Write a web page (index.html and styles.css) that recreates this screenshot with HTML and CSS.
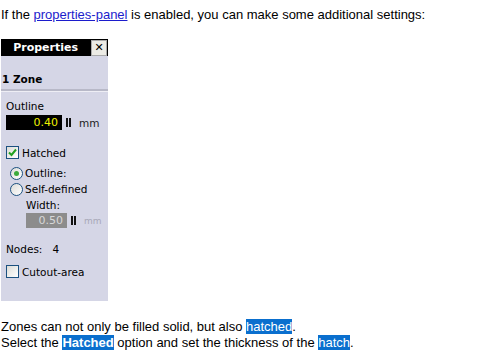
FILE: index.html
```html
<!DOCTYPE html>
<html>
  <head>
    <meta charset="UTF-8">
    <title>Zones</title>
    <link rel="stylesheet" href="styles.css">
  </head>
  <body>
    <p class="intro">If the <a href="#">properties-panel</a> is enabled, you can make some additional settings:</p>

    <div class="panel">
      <div class="panel-head">
        <span class="panel-title">Properties</span>
        <span class="close">&#x2715;</span>
      </div>
      <div class="panel-sub">1 Zone</div>

      <div class="panel-body">
        <div class="label">Outline</div>
        <div class="field">
          <span class="num active">0.40</span>
          <span class="spin"></span>
          <span class="unit">mm</span>
        </div>

        <label class="check">
          <span class="box checked">
            <svg width="9" height="9" viewBox="0 0 9 9"><path d="M1 4.5 L3.5 7 L8 1.5" fill="none" stroke="#21a121" stroke-width="2"/></svg>
          </span>
          Hatched
        </label>

        <div class="radios">
          <div class="radio"><span class="dot on"></span>Outline:</div>
          <div class="radio"><span class="dot"></span>Self-defined</div>
          <div class="sub">
            <div class="label">Width:</div>
            <div class="field">
              <span class="num disabled">0.50</span>
              <span class="spin"></span>
              <span class="unit faded">mm</span>
            </div>
          </div>
        </div>

        <div class="nodes">Nodes:&nbsp;&nbsp; 4</div>

        <label class="check cutout">
          <span class="box"></span>
          Cutout-area
        </label>
      </div>
    </div>

    <p class="outro">
      Zones can not only be filled solid, but also <span class="hl">hatched</span>.<br>
      Select the <span class="hl"><b>Hatched</b></span> option and set the thickness of the <span class="hl">hatch</span>.
    </p>
  </body>
</html>
```

FILE: styles.css
```css
body {
  margin: 0;
  padding: 0 1px;
  font-family: "Liberation Sans", Arial, sans-serif;
  font-size: 13px;
  color: #000;
  background: #fff;
}
.intro {
  margin: 7px 0 0;
  line-height: 16px;
}
.intro a {
  color: #1c1ccc;
}
.panel {
  margin-top: 16px;
  width: 107px;
  height: 262px;
  background: #d5d6e6;
  font-family: "DejaVu Sans", Tahoma, sans-serif;
  font-size: 10.5px;
}
.panel-head {
  height: 17px;
  background: #000;
  display: flex;
  align-items: center;
  justify-content: flex-end;
  padding-right: 1px;
}
.panel-title {
  color: #fff;
  font-weight: bold;
  font-size: 11px;
  margin-right: 13px;
}
.close {
  width: 14px;
  height: 14px;
  background: #ecebe5;
  color: #000;
  font-size: 11px;
  display: flex;
  align-items: center;
  justify-content: center;
  border: 1px solid #aaa;
}
.panel-sub {
  font-weight: bold;
  padding: 17px 0 0 1px;
  height: 16px;
  border-bottom: 2px solid #b8b9c8;
  box-shadow: 0 1px 0 #eeeef5;
}
.panel-body {
  padding: 9px 0 0 5px;
}
.label {
  line-height: 13px;
}
.field {
  display: flex;
  align-items: center;
  margin-top: 2px;
}
.num {
  width: 56px;
  height: 15px;
  box-sizing: border-box;
  text-align: right;
  padding-right: 4px;
  line-height: 15px;
  font-size: 11px;
}
.num.active {
  background: #000;
  color: #f0f000;
}
.num.disabled {
  width: 41px;
  background: #8c8c8c;
  color: #d8d8d8;
}
.spin {
  width: 5px;
  height: 9px;
  margin-left: 4px;
  border-left: 2px solid #111;
  border-right: 2px solid #111;
  box-sizing: border-box;
}
.unit {
  margin-left: 8px;
  color: #222;
}
.unit.faded {
  color: #a8a8b8;
  font-size: 9px;
}
.check {
  display: flex;
  align-items: center;
  gap: 3px;
  margin-top: 16px;
}
.check.cutout {
  margin-top: 10px;
}
.box {
  width: 13px;
  height: 13px;
  box-sizing: border-box;
  border: 1px solid #1c5180;
  background: linear-gradient(135deg, #dcdcd7, #fff);
  display: flex;
  align-items: center;
  justify-content: center;
}
.radios {
  margin-top: 6px;
  padding-left: 4px;
}
.radio {
  display: flex;
  align-items: center;
  gap: 2px;
  height: 16px;
}
.dot {
  width: 13px;
  height: 13px;
  box-sizing: border-box;
  border: 1px solid #1c5180;
  border-radius: 50%;
  background: linear-gradient(135deg, #dcdcd7, #fff);
  display: flex;
  align-items: center;
  justify-content: center;
}
.dot.on::after {
  content: "";
  width: 5px;
  height: 5px;
  border-radius: 50%;
  background: #3cab3c;
}
.sub {
  padding-left: 16px;
  margin-top: 2px;
}
.field .num.disabled {
  margin-top: 0;
}
.sub .field {
  margin-top: 1px;
}
.nodes {
  margin-top: 15px;
}
.outro {
  margin: 18px 0 0;
  line-height: 16px;
}
.hl {
  background: #0a6fce;
  color: #fff;
}
```
